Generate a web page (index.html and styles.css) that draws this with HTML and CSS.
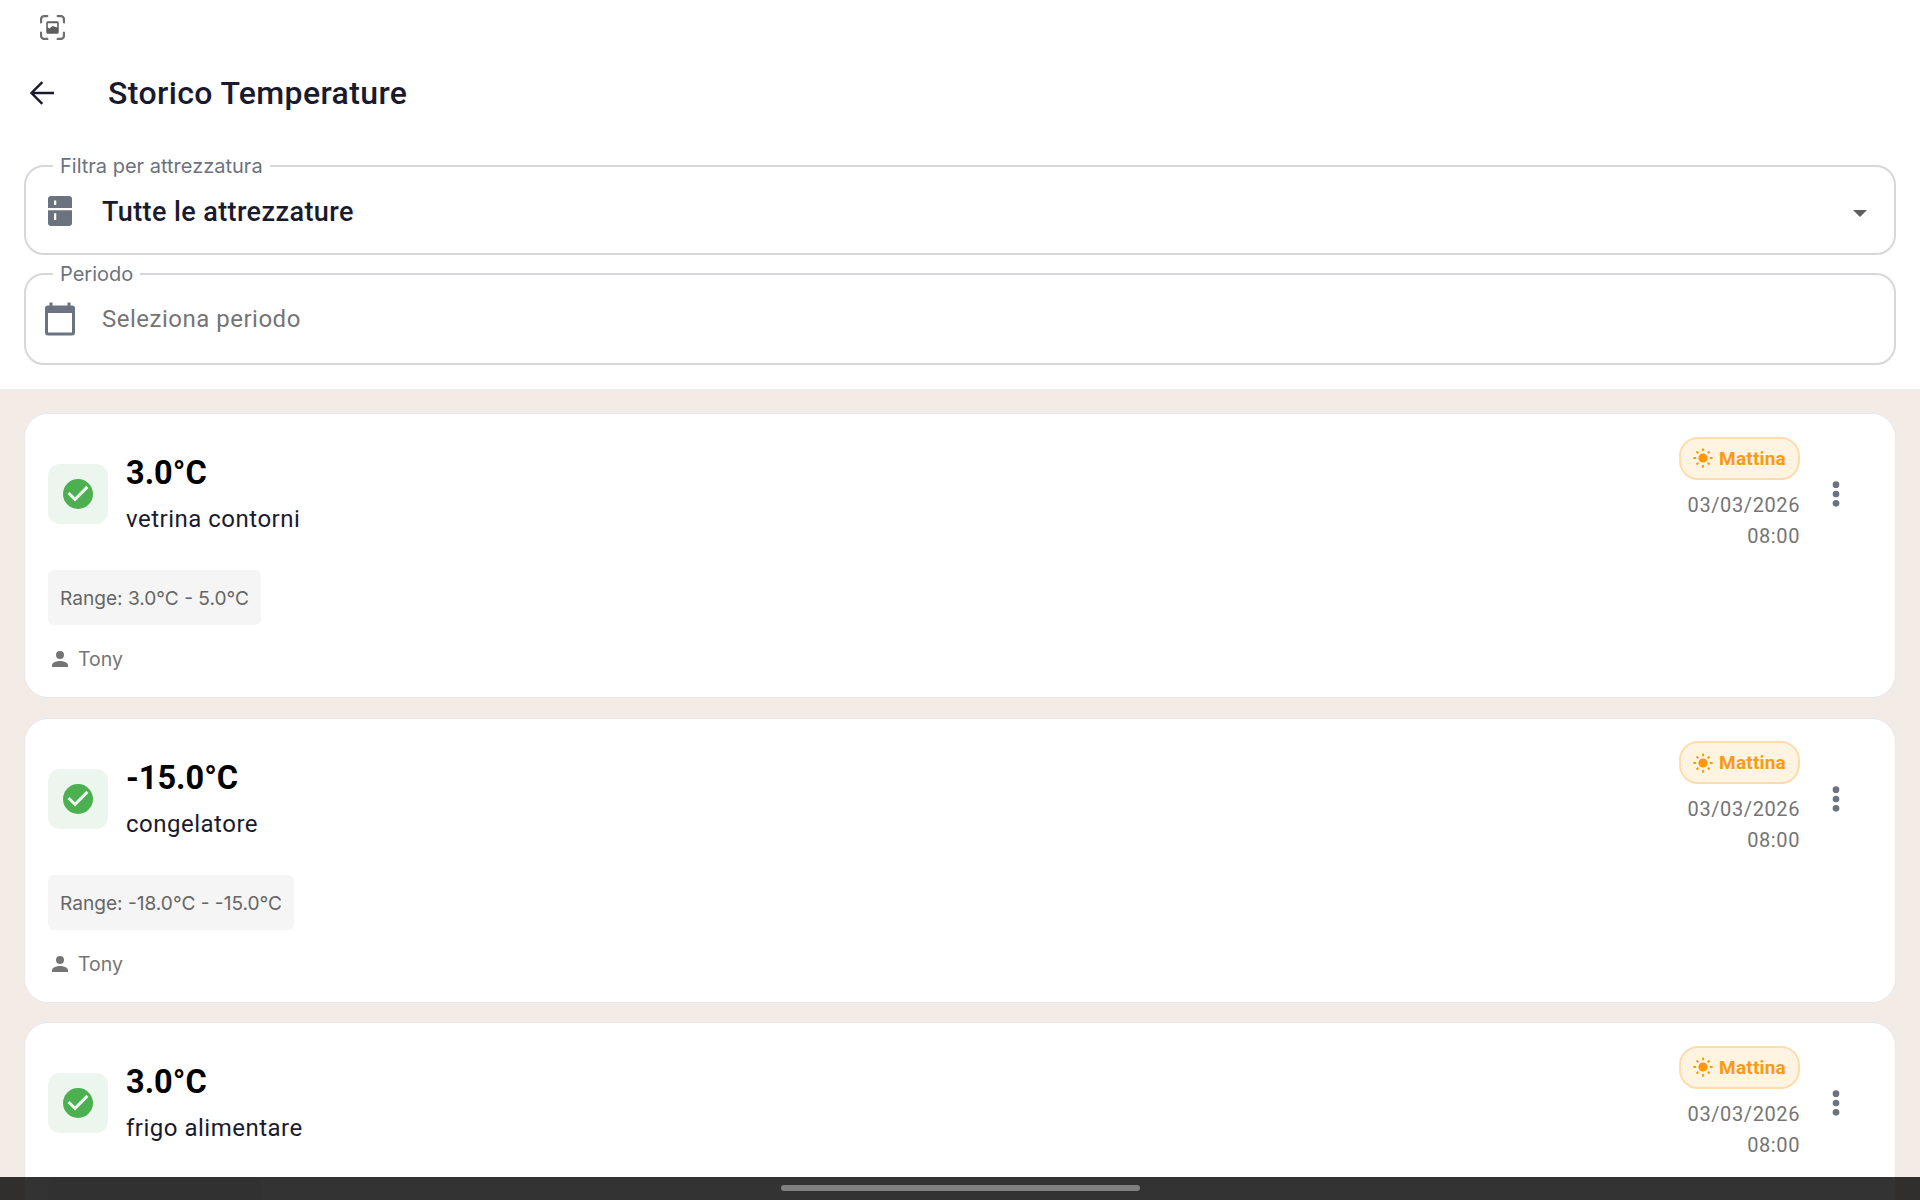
FILE: index.html
```html
<!DOCTYPE html>
<html lang="it">
<head>
<meta charset="utf-8">
<title>Storico Temperature</title>
<link rel="stylesheet" href="styles.css">
</head>
<body>
<div class="page">
  <section class="top">
    <div class="status">
      <svg class="shot" viewBox="0 0 24 24"><path d="M1 7V4a3 3 0 0 1 3-3h3M17 1h3a3 3 0 0 1 3 3v3M23 17v3a3 3 0 0 1-3 3h-3M7 23H4a3 3 0 0 1-3-3v-3" class="shot-line"/><path class="shot-fill" d="M7.500 6h9A1.500 1.500 0 0 1 18 7.500v9a1.500 1.500 0 0 1-1.500 1.500h-9A1.500 1.500 0 0 1 6 16.500v-9A1.500 1.500 0 0 1 7.500 6Zm0 6 1.500 1 3-2.500 4.500 1.500V8h-9Z" fill-rule="evenodd"/></svg>
    </div>
    <header class="appbar">
      <svg class="back" viewBox="0 0 24 24"><path d="M20 12H5M12.200 4.800 5 12l7.200 7.200"/></svg>
      <h1 class="title">Storico Temperature</h1>
    </header>
    <fieldset class="field field-select">
      <legend class="legend">Filtra per attrezzatura</legend>
      <svg class="field-icon" viewBox="0 0 24 24"><path d="M6 2h12a2 2 0 0 1 2 2v6H4V4a2 2 0 0 1 2-2Zm2 3v3h1.500V5ZM4 11.500h16V20a2 2 0 0 1-2 2H6a2 2 0 0 1-2-2Zm4 2v4.500h1.500v-4.500Z" fill-rule="evenodd"/></svg>
      <span class="value">Tutte le attrezzature</span>
      <span class="caret"></span>
    </fieldset>
    <fieldset class="field field-date">
      <legend class="legend">Periodo</legend>
      <svg class="field-icon field-icon-date" viewBox="0 0 24 24"><path d="M20 3h-1V1h-2v2H7V1H5v2H4a2 2 0 0 0-2 2v16a2 2 0 0 0 2 2h16a2 2 0 0 0 2-2V5a2 2 0 0 0-2-2Zm0 18H4V8h16Z"/></svg>
      <span class="placeholder">Seleziona periodo</span>
    </fieldset>
  </section>

  <main class="list">
    <article class="card">
      <div class="card-head">
        <div class="state"><svg class="check" viewBox="0 0 24 24"><path d="M12 2a10 10 0 1 0 0 20 10 10 0 0 0 0-20Zm-2 15-5-5 1.410-1.410L10 14.170l7.590-7.590L19 8Z"/></svg></div>
        <div class="reading">
          <div class="temp">3.0°C</div>
          <div class="name">vetrina contorni</div>
        </div>
        <div class="meta">
          <span class="shift"><svg class="sun" viewBox="0 0 24 24"><path d="M12 7a5 5 0 1 0 0 10 5 5 0 0 0 0-10ZM11 1.500h2v3h-2Zm0 18h2v3h-2ZM1.500 11h3v2h-3Zm18 0h3v2h-3ZM4.200 5.600l1.400-1.400 2 2-1.400 1.400Zm12.200 12.200 1.400-1.400 2 2-1.400 1.400ZM4.200 18.400l2-2 1.400 1.400-2 2ZM16.400 6.200l2-2 1.400 1.400-2 2Z"/></svg>Mattina</span>
          <span class="date">03/03/2026</span>
          <span class="date">08:00</span>
        </div>
        <svg class="more" viewBox="0 0 24 24"><circle cx="12" cy="5" r="2.500"/><circle cx="12" cy="12" r="2.500"/><circle cx="12" cy="19" r="2.500"/></svg>
      </div>
      <div class="range">Range: 3.0°C - 5.0°C</div>
      <div class="user"><svg class="person" viewBox="0 0 24 24"><path d="M12 12a4 4 0 1 0 0-8 4 4 0 0 0 0 8Zm0 2c-2.670 0-8 1.340-8 4v2h16v-2c0-2.660-5.330-4-8-4Z"/></svg>Tony</div>
    </article>

    <article class="card">
      <div class="card-head">
        <div class="state"><svg class="check" viewBox="0 0 24 24"><path d="M12 2a10 10 0 1 0 0 20 10 10 0 0 0 0-20Zm-2 15-5-5 1.410-1.410L10 14.170l7.590-7.590L19 8Z"/></svg></div>
        <div class="reading">
          <div class="temp">-15.0°C</div>
          <div class="name">congelatore</div>
        </div>
        <div class="meta">
          <span class="shift"><svg class="sun" viewBox="0 0 24 24"><path d="M12 7a5 5 0 1 0 0 10 5 5 0 0 0 0-10ZM11 1.500h2v3h-2Zm0 18h2v3h-2ZM1.500 11h3v2h-3Zm18 0h3v2h-3ZM4.200 5.600l1.400-1.400 2 2-1.400 1.400Zm12.200 12.200 1.400-1.400 2 2-1.400 1.400ZM4.200 18.400l2-2 1.400 1.400-2 2ZM16.400 6.200l2-2 1.400 1.400-2 2Z"/></svg>Mattina</span>
          <span class="date">03/03/2026</span>
          <span class="date">08:00</span>
        </div>
        <svg class="more" viewBox="0 0 24 24"><circle cx="12" cy="5" r="2.500"/><circle cx="12" cy="12" r="2.500"/><circle cx="12" cy="19" r="2.500"/></svg>
      </div>
      <div class="range">Range: -18.0°C - -15.0°C</div>
      <div class="user"><svg class="person" viewBox="0 0 24 24"><path d="M12 12a4 4 0 1 0 0-8 4 4 0 0 0 0 8Zm0 2c-2.670 0-8 1.340-8 4v2h16v-2c0-2.660-5.330-4-8-4Z"/></svg>Tony</div>
    </article>

    <article class="card">
      <div class="card-head">
        <div class="state"><svg class="check" viewBox="0 0 24 24"><path d="M12 2a10 10 0 1 0 0 20 10 10 0 0 0 0-20Zm-2 15-5-5 1.410-1.410L10 14.170l7.590-7.590L19 8Z"/></svg></div>
        <div class="reading">
          <div class="temp">3.0°C</div>
          <div class="name">frigo alimentare</div>
        </div>
        <div class="meta">
          <span class="shift"><svg class="sun" viewBox="0 0 24 24"><path d="M12 7a5 5 0 1 0 0 10 5 5 0 0 0 0-10ZM11 1.500h2v3h-2Zm0 18h2v3h-2ZM1.500 11h3v2h-3Zm18 0h3v2h-3ZM4.200 5.600l1.400-1.400 2 2-1.400 1.400Zm12.200 12.200 1.400-1.400 2 2-1.400 1.400ZM4.200 18.400l2-2 1.400 1.400-2 2ZM16.400 6.200l2-2 1.400 1.400-2 2Z"/></svg>Mattina</span>
          <span class="date">03/03/2026</span>
          <span class="date">08:00</span>
        </div>
        <svg class="more" viewBox="0 0 24 24"><circle cx="12" cy="5" r="2.500"/><circle cx="12" cy="12" r="2.500"/><circle cx="12" cy="19" r="2.500"/></svg>
      </div>
      <div class="range">Range: 3.0°C - 5.0°C</div>
      <div class="user"><svg class="person" viewBox="0 0 24 24"><path d="M12 12a4 4 0 1 0 0-8 4 4 0 0 0 0 8Zm0 2c-2.670 0-8 1.340-8 4v2h16v-2c0-2.660-5.330-4-8-4Z"/></svg>Tony</div>
    </article>
  </main>
</div>
<div class="navbar"><span class="handle"></span></div>
</body>
</html>
```
FILE: styles.css
```css
* { box-sizing: border-box; }
html, body { margin: 0; height: 100%; overflow: hidden; }
body { font-family: Roboto, "Noto Sans", sans-serif; background: #f3ebe5; color: #1a1a2e; }
.page { height: 1200px; display: flex; flex-direction: column; overflow: hidden; }
.top { background: #fff; padding: 0 24px 20px 24px; height: 389px; flex: none; }
.status { height: 54px; padding: 15px 0 0 16px; }
.shot { width: 25px; height: 25px; display: block; }
.shot-line { fill: none; stroke: #6e6e6e; stroke-width: 2.200; stroke-linecap: round; }
.shot-fill { fill: #5e5e5e; }
.appbar { height: 78px; display: flex; align-items: center; }
.back { width: 36px; height: 36px; fill: none; stroke: #1a1a2e; stroke-width: 1.600; flex: none; }
.title { margin: 0 0 0 48px; font-size: 32px; font-weight: 500; line-height: 40px; letter-spacing: .38px; }
.field { position: relative; margin: 0; padding: 0 0 0 21px; border: 2px solid #d6d6dd; border-radius: 20px; display: flex; align-items: center; width: 1872px; }
.field-select { height: 101px; margin-top: 22px; }
.field-date { height: 103px; margin-top: 7px; }
.legend { margin-left: 6px; padding: 0 7px; font-family: Inter, Roboto, sans-serif; font-size: 20px; line-height: 24px; color: #6b7280; }
.field-icon { position: relative; top: -5px; width: 36px; height: 36px; fill: #6b7280; flex: none; margin-left: -5px; }
.field-icon-date { top: -6px; }
.value { position: relative; top: -4px; margin-left: 24px; font-size: 27px; font-weight: 500; letter-spacing: .4px; }
.placeholder { position: relative; top: -6px; margin-left: 24px; font-size: 24px; color: #757575; letter-spacing: .5px; }
.caret { position: absolute; right: 27px; top: 32px; border: 7px solid transparent; border-top-color: #5f5f5f; border-bottom: 0; }
.list { padding: 24px 24px 0; display: flex; flex-direction: column; gap: 19.500px; }
.card { flex: none; height: 285px; background: #fff; border: 1px solid #e8e9ee; border-radius: 24px; padding: 23px 23px 0; }
.card-head { display: flex; align-items: center; height: 114px; }
.state { width: 60px; height: 60px; border-radius: 12px; background: #edf6ee; display: flex; align-items: center; justify-content: center; flex: none; }
.check { width: 36px; height: 36px; fill: #4caf50; }
.reading { margin-left: 18px; flex: 1; display: flex; flex-direction: column; gap: 10px; }
.temp { font-size: 32.500px; font-weight: 700; line-height: 40px; color: #000; }
.name { font-size: 24px; line-height: 32px; letter-spacing: .5px; }
.meta { display: flex; flex-direction: column; align-items: flex-end; }
.shift { display: flex; align-items: center; height: 43px; padding: 0 12px 0 11px; border: 2px solid #ffdcae; border-radius: 19px; background: #fff3e2; color: #f99b13; font-size: 19px; font-weight: 700; letter-spacing: .2px; margin-bottom: 10px; }
.sun { width: 22px; height: 22px; fill: #ff9800; margin-right: 5px; }
.date { font-size: 20px; line-height: 31px; color: #757575; letter-spacing: .6px; }
.more { width: 32px; height: 32px; fill: #6b7280; margin: 0 20px 0 20px; flex: none; }
.range { margin-top: 19px; display: inline-block; height: 55px; padding: 0 12px; line-height: 57px; font-family: Inter, Roboto, sans-serif; font-size: 19.100px; color: #666; background: #f5f5f5; border-radius: 6px; }
.user { display: flex; align-items: center; margin-top: 22px; font-family: Inter, Roboto, sans-serif; font-size: 19.500px; color: #757575; }
.person { width: 24px; height: 24px; fill: #757575; margin-right: 6px; }
.navbar { position: fixed; left: 0; right: 0; bottom: 0; height: 23px; background: rgba(0,0,0,.8); display: flex; justify-content: center; padding-top: 8px; }
.handle { width: 359px; height: 6px; border-radius: 3px; background: #808080; }
```
